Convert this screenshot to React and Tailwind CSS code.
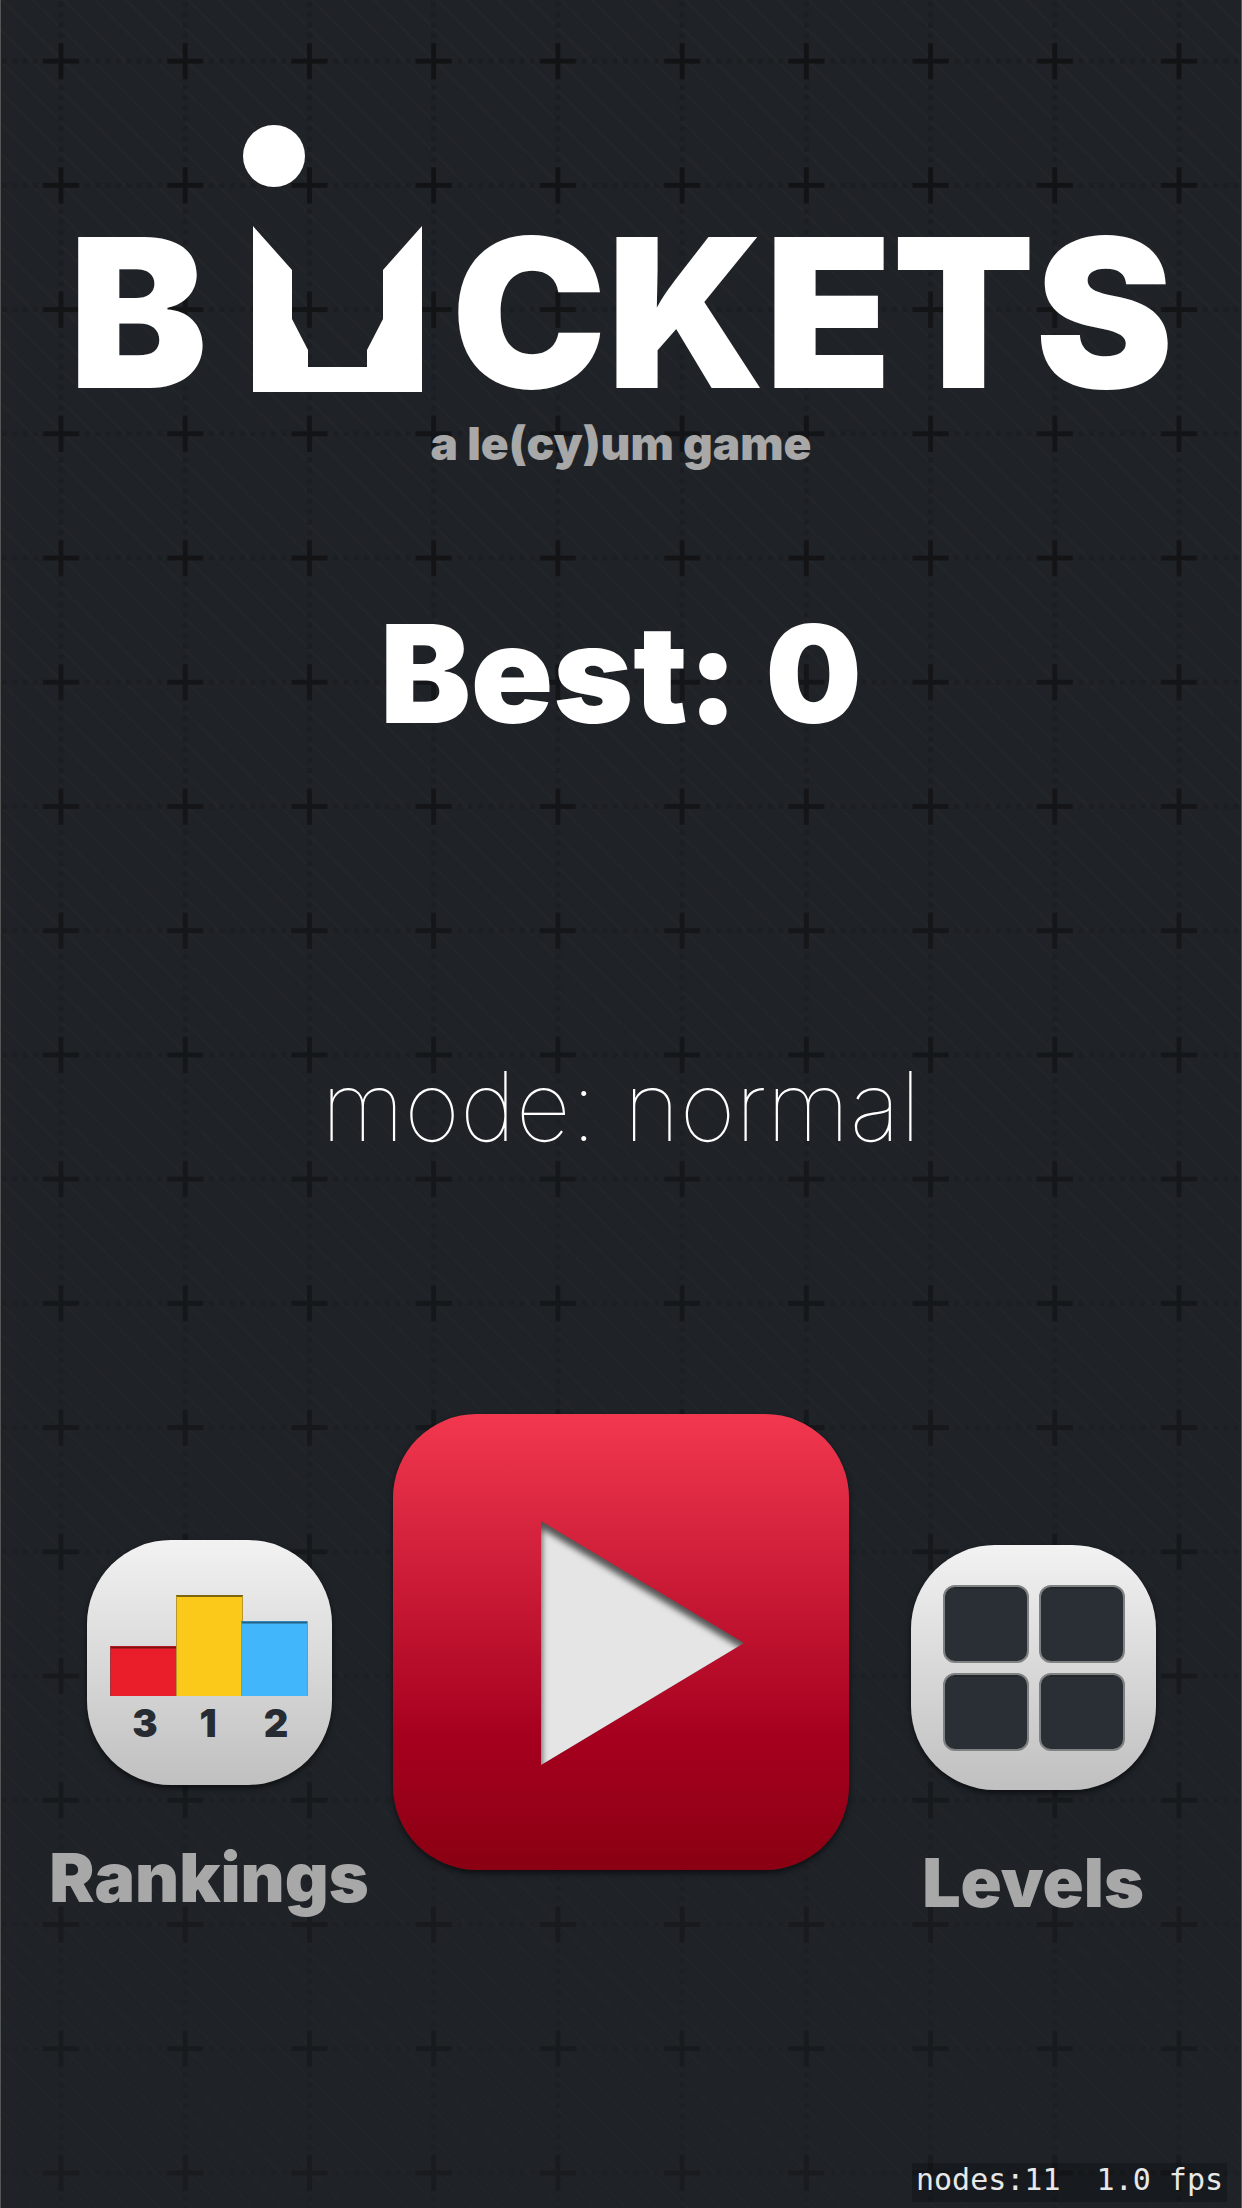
import React from 'react';

function Backdrop() {
  return (
    <svg
      className="absolute inset-0 -z-10 h-full w-full"
      viewBox="0 0 1240 2204"
      preserveAspectRatio="xMidYMin slice"
      aria-hidden="true"
    >
      <defs>
        <linearGradient id="fade" x1="0" y1="0" x2="0" y2="1">
          <stop offset="0" stopColor="#fff" />
          <stop offset="1" stopColor="#777" />
        </linearGradient>
        <mask id="fadeMask" maskUnits="userSpaceOnUse" x="0" y="0" width="1240" height="2204">
          <rect width="1240" height="2204" fill="url(#fade)" />
        </mask>
        <pattern id="stripes" width="31" height="31" patternUnits="userSpaceOnUse">
          <path d="M-4 -6L37 35M-35 -6L6 35M27 -6L68 35" stroke="#242629" strokeWidth="2" />
        </pattern>
        <pattern id="crosses" width="124" height="124" patternUnits="userSpaceOnUse">
          <path d="M61 0V124M0 61H124" stroke="#1b1e22" strokeWidth="5" strokeDasharray="5 5.333" strokeDashoffset="-2" />
          <path d="M61 43V79M43 61H79" stroke="#121315" strokeWidth="5" />
        </pattern>
      </defs>
      <rect width="1240" height="2204" fill="#1f2328" />
      <g mask="url(#fadeMask)">
        <rect width="1240" height="2204" fill="url(#stripes)" />
        <rect width="1240" height="2204" fill="url(#crosses)" />
      </g>
    </svg>
  );
}

function BucketU() {
  return (
    <svg className="mb-[25px] ml-9 mr-7 h-[267px] w-[180px] shrink-0" viewBox="0 0 180 267" fill="#fff" aria-hidden="true">
      <circle cx="31" cy="31" r="31" />
      <path d="M10 101L49 145V194L65 225V242H124V225L140 194V145L179 101V267H10Z" />
    </svg>
  );
}

function PodiumIcon() {
  return (
    <svg className="h-full w-full" viewBox="0 0 245 245" aria-hidden="true">
      <rect x="23" y="106" width="67" height="50" fill="#ea1e2a" />
      <path d="M23 107.500H89" stroke="#7c1318" strokeWidth="2" />
      <path d="M23.500 107V156" stroke="#a3343b" />
      <rect x="89" y="55" width="67" height="101" fill="#fac919" />
      <path d="M89 56H156" stroke="#7d650f" strokeWidth="2" />
      <path d="M89.500 56V156M155.500 56V82" stroke="#b8962a" />
      <rect x="154" y="81" width="67" height="75" fill="#41b6fa" />
      <path d="M154 82.500H220" stroke="#255f80" strokeWidth="2" />
      <path d="M154.500 82V156M220.500 82V156" stroke="#5f9fc4" />
      <g fill="#262c32" fontSize="38" textAnchor="middle" className="font-[Inter,sans-serif] font-black">
        <text x="58" y="197">3</text>
        <text x="121" y="197">1</text>
        <text x="189" y="197">2</text>
      </g>
    </svg>
  );
}

function GridIcon() {
  return (
    <svg className="h-full w-full" viewBox="0 0 245 245" fill="#2a2e35" stroke="#808182" strokeWidth="2" aria-hidden="true">
      <rect x="33" y="41" width="84" height="76" rx="11" />
      <rect x="129" y="41" width="84" height="76" rx="11" />
      <rect x="33" y="129" width="84" height="76" rx="11" />
      <rect x="129" y="129" width="84" height="76" rx="11" />
      <path d="M43 43H107M139 43H203M43 131H107M139 131H203" stroke="#22272b" />
    </svg>
  );
}

function PlayIcon() {
  return (
    <svg className="h-full w-full" viewBox="0 0 456 456" aria-hidden="true">
      <defs>
        <clipPath id="tri"><path d="M148 107L351 229L148 351Z" /></clipPath>
        <filter id="soft" x="-20%" y="-20%" width="140%" height="140%"><feGaussianBlur stdDeviation="3" /></filter>
      </defs>
      <g clipPath="url(#tri)">
        <rect x="140" y="100" width="220" height="260" fill="#555" />
        <path d="M149 115L351 236L351 400H149Z" fill="#e5e5e5" filter="url(#soft)" />
      </g>
    </svg>
  );
}

function Tile({ icon, label, className }) {
  return (
    <button type="button" className={`flex w-[330px] shrink-0 flex-col items-center gap-[57px] ${className}`}>
      <span className="h-[245px] w-[245px] rounded-[84px] bg-linear-to-b from-[#f2f2f2] to-[#c0c0c0] shadow-[0_3px_6px_rgba(0,0,0,0.6)]">
        {icon}
      </span>
      <span className="text-[68px] leading-[70px] text-[#a8a8a8]">{label}</span>
    </button>
  );
}

export default function App() {
  return (
    <main className="relative isolate flex min-h-screen w-full flex-col items-center overflow-hidden border-x border-[#555] font-[Inter,sans-serif] font-black text-white">
      <Backdrop />
      <h1 aria-label="BUCKETS" className="flex items-end justify-center pt-[125px] text-[208px] leading-[210px]">
        <span>B</span>
        <BucketU />
        <span>CKETS</span>
      </h1>
      <p className="text-[46px] leading-[52px] text-[#a8a8a8]">a le(cy)um game</p>
      <p className="mt-[136px] text-[136px] leading-[138px]">Best: 0</p>
      <button type="button" className="mt-[315px] text-[96px] leading-none font-thin">mode: normal</button>
      <nav className="mt-[260px] flex items-start justify-center gap-[19px]">
        <Tile icon={<PodiumIcon />} label="Rankings" className="pt-[126px]" />
        <button
          type="button"
          aria-label="Play"
          className="h-[456px] w-[456px] shrink-0 rounded-[84px] bg-[linear-gradient(#f2384f_0%,#a6001f_71%,#8a0012_100%)] shadow-[0_3px_6px_rgba(0,0,0,0.6)]"
        >
          <PlayIcon />
        </button>
        <Tile icon={<GridIcon />} label="Levels" className="pt-[131px]" />
      </nav>
      <output className="absolute right-3.5 bottom-1.5 bg-black/25 px-1 pb-1.5 text-[30px] leading-[33px] font-normal whitespace-pre text-[#e8e8e8] [font-family:'DejaVu_Sans_Mono',monospace]">
        {'nodes:11  1.0 fps'}
      </output>
    </main>
  );
}
